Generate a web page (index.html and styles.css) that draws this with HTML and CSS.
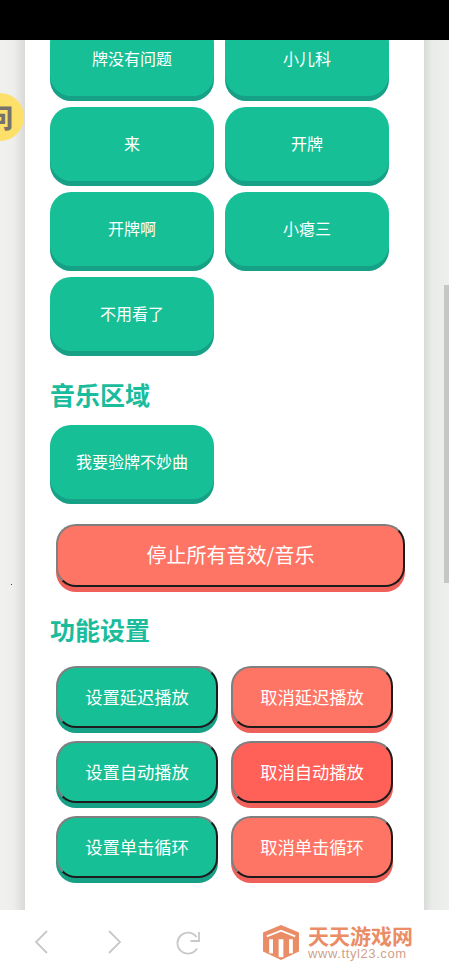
FILE: index.html
```html
<!DOCTYPE html>
<html lang="zh-CN">
<head>
<meta charset="UTF-8">
<meta name="viewport" content="width=device-width, initial-scale=1.0">
<title>语音盒子</title>
<link rel="stylesheet" href="styles.css">
</head>
<body>
<div class="status-bar"></div>

<div class="viewport">
  <div class="gutter gutter-left"></div>

  <div class="content">
    <div class="sound-grid first-grid">
      <button class="sound">牌没有问题</button>
      <button class="sound">小儿科</button>
      <button class="sound">来</button>
      <button class="sound">开牌</button>
      <button class="sound">开牌啊</button>
      <button class="sound">小瘪三</button>
      <button class="sound">不用看了</button>
    </div>

    <h2 class="section-title">音乐区域</h2>
    <div class="sound-grid">
      <button class="sound">我要验牌不妙曲</button>
    </div>

    <button class="action stop red">停止所有音效/音乐</button>

    <h2 class="section-title settings-title">功能设置</h2>
    <div class="settings">
      <button class="action green">设置延迟播放</button>
      <button class="action red">取消延迟播放</button>
      <button class="action green">设置自动播放</button>
      <button class="action red active">取消自动播放</button>
      <button class="action green">设置单击循环</button>
      <button class="action red">取消单击循环</button>
    </div>
  </div>

  <div class="gutter gutter-right"></div>

  <div class="float-ball"><span>问</span></div>
  <div class="speck"></div>
  <div class="scroll-thumb"></div>
</div>

<div class="nav-bar">
  <svg class="nav-icon back" width="20" height="26" viewBox="0 0 20 26"><path d="M15 2 L4 13 L15 24"/></svg>
  <svg class="nav-icon forward" width="20" height="26" viewBox="0 0 20 26"><path d="M5 2 L16 13 L5 24"/></svg>
  <svg class="nav-icon reload" width="26" height="26" viewBox="0 0 26 26"><path d="M21.500 8 A10.500 10.500 0 1 0 22 19.500"/><path d="M15.500 12 H24 V3"/></svg>

  <div class="logo">
    <svg class="logo-mark" width="38" height="35" viewBox="0 0 40 37">
      <path class="hex" d="M20 0 L39 8 V28 L20 37 L1 28 V8 Z"/>
      <path class="hex-line" d="M5 12 L20 6 L35 12"/>
      <rect class="hex-cut" x="7.500" y="15" width="4" height="15"/>
      <rect class="hex-cut" x="17.500" y="15" width="5" height="19"/>
      <rect class="hex-cut" x="28.500" y="15" width="4" height="15"/>
    </svg>
    <div class="logo-text">
      <div class="logo-name">天天游戏网</div>
      <div class="logo-url">www.ttyl23.com</div>
    </div>
  </div>
</div>
</body>
</html>
```

FILE: styles.css
```css
* {
  box-sizing: border-box;
}

body {
  margin: 0;
  height: 973px;
  width: 449px;
  overflow: hidden;
  display: flex;
  flex-direction: column;
  background: #ffffff;
  font-family: "Noto Sans CJK SC", "Noto Sans", sans-serif;
}

.status-bar {
  height: 40px;
  background: #000000;
  flex-shrink: 0;
}

.viewport {
  position: relative;
  height: 870px;
  display: flex;
  overflow: hidden;
  flex-shrink: 0;
}

.gutter {
  width: 25px;
  flex-shrink: 0;
}

.gutter-left {
  background: linear-gradient(90deg, #f0f1ee 0%, #eeefec 55%, #d9dad7 100%);
}

.gutter-right {
  background: linear-gradient(90deg, #d9dbd8 0%, #e9ebe8 30%, #eef0ed 100%);
}

.content {
  width: 399px;
  background: #ffffff;
  padding: 0 25px;
}

.sound-grid {
  display: grid;
  grid-template-columns: 164px 164px;
  column-gap: 11px;
  row-gap: 11px;
}

.first-grid {
  margin-top: -18px;
}

button {
  font-family: inherit;
  font-weight: 400;
  color: #ffffff;
  padding: 0 0 2px;
}

.sound {
  height: 74px;
  border: none;
  border-radius: 21px;
  font-size: 16px;
  background: #16bf96;
  box-shadow: 0 5px 0 #16a085;
}

.section-title {
  margin: 26px 0 0;
  height: 36px;
  line-height: 34px;
  font-size: 25px;
  font-weight: 700;
  color: #1abc9c;
}

.section-title + .sound-grid {
  margin-top: 12px;
}

.action {
  border-width: 2px;
  border-style: solid;
  border-color: #7f7f7f #1c1c1c #1c1c1c #7f7f7f;
  border-radius: 20px;
  font-size: 17.3px;
  height: 62px;
}

.green {
  background: #16bf96;
  box-shadow: 0 5px 0 #16a085;
}

.red {
  background: #ff7565;
  box-shadow: 0 5px 0 #f0605a;
}

.red.active {
  background: #ff6058;
}

.stop {
  display: block;
  width: 349px;
  height: 63px;
  margin: 25px 0 0 6px;
  font-size: 20px;
}

.settings-title {
  margin-top: 25px;
}

.settings {
  display: grid;
  grid-template-columns: 162px 162px;
  column-gap: 13px;
  row-gap: 13px;
  margin: 18px 0 0 6px;
}

.float-ball {
  position: absolute;
  left: -24px;
  top: 53px;
  width: 48px;
  height: 48px;
  border-radius: 50%;
  background: #fde06a;
  color: #77736a;
  font-size: 26px;
  font-weight: 900;
  line-height: 48px;
  text-align: center;
}

.speck {
  position: absolute;
  left: 11px;
  top: 544px;
  width: 1px;
  height: 1px;
  background: #a02020;
}

.scroll-thumb {
  position: absolute;
  left: 444px;
  top: 245px;
  width: 5px;
  height: 298px;
  background: #c6c7c5;
}

.nav-bar {
  position: relative;
  flex: 1;
  display: flex;
  align-items: center;
}

.nav-icon {
  position: absolute;
  top: 19px;
  fill: none;
  stroke: #c8c8c8;
  stroke-width: 1.8;
}

.back {
  left: 32px;
}

.forward {
  left: 104px;
}

.reload {
  left: 175px;
}

.logo {
  margin-left: 262px;
  margin-top: 1px;
  display: flex;
  align-items: center;
  gap: 8px;
}

.hex {
  fill: #ea8d66;
}

.hex-line {
  fill: none;
  stroke: #ffffff;
  stroke-width: 2;
}

.hex-cut {
  fill: #ffffff;
}

.logo-name {
  font-size: 21px;
  font-weight: 700;
  line-height: 21px;
  color: #ea8d66;
}

.logo-url {
  margin-top: 2px;
  font-size: 13px;
  line-height: 12px;
  letter-spacing: 0.6px;
  color: #cf9f8c;
  font-family: "Liberation Sans", sans-serif;
}
```
